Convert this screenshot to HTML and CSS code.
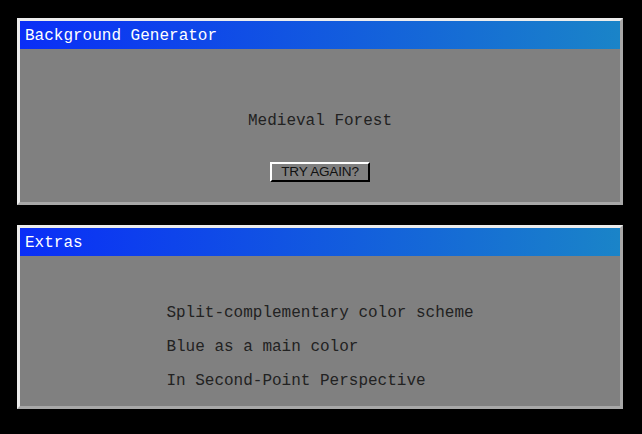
FILE: index.html
```html
<!DOCTYPE html>
<html>
<head>
<meta charset="utf-8">
<link rel="stylesheet" href="styles.css">
</head>
<body>
<div class="page">
  <section class="window">
    <div class="titlebar">Background Generator</div>
    <div class="content gen">
      <div class="result">Medieval Forest</div>
      <button class="btn">TRY AGAIN?</button>
    </div>
  </section>
  <section class="window">
    <div class="titlebar">Extras</div>
    <div class="content extras">
      <ul class="list">
        <li>Split-complementary color scheme</li>
        <li>Blue as a main color</li>
        <li>In Second-Point Perspective</li>
      </ul>
    </div>
  </section>
</div>
</body>
</html>
```
FILE: styles.css
```css
html, body {
  margin: 0;
  padding: 0;
  background: #000;
}
body {
  font-family: "Liberation Mono", "Courier New", monospace;
  font-size: 16px;
}
.page {
  padding: 18px 19px 0 17px;
  display: flex;
  flex-direction: column;
  gap: 20px;
}
.window {
  border: 3px solid;
  border-color: #ececec #a8a8a8 #a8a8a8 #ececec;
  background: #808080;
}
.titlebar {
  height: 28px;
  line-height: 30px;
  padding-left: 5px;
  color: #fff;
  background: linear-gradient(to right, #0a2ef7, #1a84c8);
  white-space: nowrap;
}
.content {
  color: #222;
}
.gen {
  height: 153px;
  box-sizing: border-box;
  padding-top: 62px;
  display: flex;
  flex-direction: column;
  align-items: center;
}
.result {
  line-height: 20px;
  height: 20px;
}
.btn {
  margin-top: 31px;
  width: 100px;
  height: 20px;
  padding: 0;
  box-sizing: border-box;
  border: 2px solid;
  border-color: #fff #000 #000 #fff;
  background: #808080;
  font-family: "Liberation Sans", Arial, sans-serif;
  font-size: 13.6px;
  letter-spacing: -0.2px;
  color: #111;
  line-height: 16px;
}
.extras {
  height: 150px;
  box-sizing: border-box;
  padding-top: 47px;
  display: flex;
  justify-content: center;
}
.list {
  list-style: none;
  margin: 0;
  padding: 0;
  display: flex;
  flex-direction: column;
  gap: 14px;
}
.list li {
  line-height: 20px;
  height: 20px;
  white-space: nowrap;
}
```
